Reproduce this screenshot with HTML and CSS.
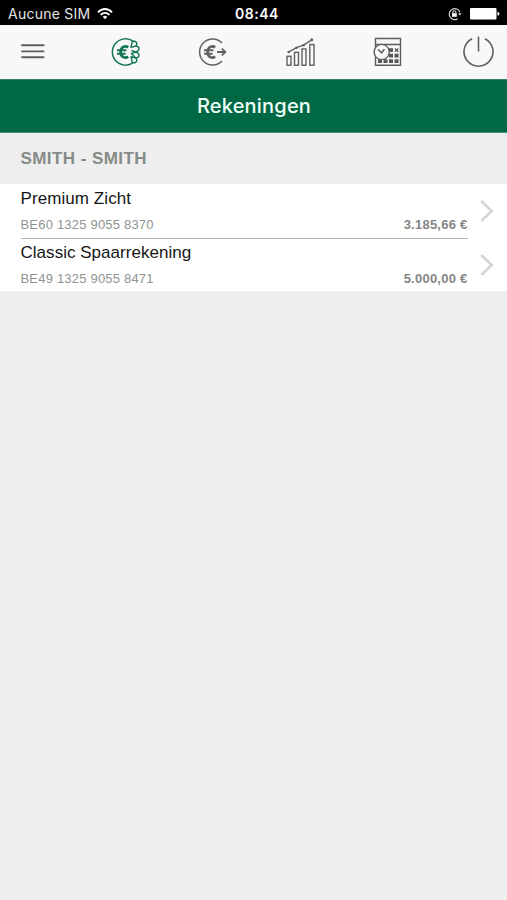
FILE: index.html
```html
<!DOCTYPE html>
<html lang="nl">
<head>
<meta charset="utf-8">
<title>Rekeningen</title>
<link rel="stylesheet" href="styles.css">
</head>
<body>
<div class="status">
  <div class="carrier"><span class="carrier-name">Aucune SIM</span>
    <svg class="wifi" width="16" height="12" viewBox="0 0 16 12" fill="none" stroke="#fff" stroke-width="1.9"><path d="M1 4.3C5-.1 11-.1 15 4.3M3.6 6.9C6.2 4.2 9.8 4.2 12.4 6.9"/><path d="M5.7 8.8Q8 6.7 10.3 8.8L8 11.2Z" fill="#fff" stroke="none"/></svg>
  </div>
  <span class="clock">08:44</span>
  <div class="indicators">
    <svg width="14" height="14" viewBox="0 0 14 14" fill="none" stroke="#ddd" stroke-width="1.1"><path d="M9.8 11.7A5.5 5.5 0 1 1 11.9 5.2"/><path d="M10.2 6.2h3.4l-1.7 2.4z" fill="#ddd" stroke="none"/><path d="M4.9 6.4V5.2a1.5 1.5 0 0 1 3 0v1.2"/><path d="M4 6.2h4.8v3.6H4z" fill="#fff" stroke="none"/></svg>
    <svg width="31" height="12" viewBox="0 0 31 12" fill="#fff"><rect width="26.5" height="11.5" rx="1"/><path d="M27.5 3.8q2 .3 2 2t-2 2z"/></svg>
  </div>
</div>
<nav class="toolbar">
  <svg class="menu" width="24" height="16" viewBox="0 0 24 16" stroke="#5b5d5e" stroke-width="1.9"><path d="M.3 1.3h23M.3 7.4h23M.3 13.3h23"/></svg>
  <svg class="accounts" width="29" height="30" viewBox="0 0 29 30" fill="none" stroke="#137653" stroke-width="1.5"><path d="M22.3 4.3A13.2 13.2 0 1 0 22.3 25.7"/><g stroke-width="2.7"><path d="M17.2 10.4C14.3 8.2 9.6 9.6 9.6 15s4.7 6.8 7.6 4.6"/><path d="M6 13.3h9.4M6 16.8h8.6" stroke-width="1.9"/></g><g stroke-width="1.4" stroke-linejoin="round"><path d="M20 10.4L21.2 5Q23.5 3.2 25.3 5.2Q26.6 7.6 24.8 9Z"/><path d="M24.8 9Q28.2 9.3 28 12.2Q27.4 14.6 24.8 14.8L20.4 13.5"/><path d="M24.8 15.2Q27.4 15.4 28 17.8Q28.2 20.7 24.8 21L20.4 16.5Z"/><path d="M20 19.6L21.2 25Q23.5 26.8 25.3 24.8Q26.6 22.4 24.8 21Z"/></g></svg>
  <svg class="transfer" width="29" height="30" viewBox="0 0 29 30" fill="none" stroke="#606263" stroke-width="1.5"><path d="M24 6A13 13 0 1 0 24 24"/><g stroke-width="2.7"><path d="M17.2 10.4C14.3 8.2 9.6 9.6 9.6 15s4.7 6.8 7.6 4.6"/><path d="M6 13.3h9.4M6 16.8h8.6" stroke-width="1.9"/></g><path d="M19 15h8.2M23.8 11.6L27.4 15L23.8 18.4" stroke-width="1.8"/></svg>
  <svg class="stats" width="30" height="30" viewBox="0 0 30 30" fill="none" stroke="#5f6162" stroke-width="1.4"><rect x="1" y="19.3" width="4" height="8.9"/><rect x="8.5" y="15.3" width="4" height="12.9"/><rect x="16" y="12" width="4" height="16.2"/><rect x="23.8" y="7.5" width="4.2" height="20.7"/><path d="M2.5 15.2L10.5 10.7L17.5 8.2L25.8 2.8"/><g fill="#5f6162" stroke="none"><circle cx="2.7" cy="15" r="1.3"/><circle cx="10.5" cy="10.7" r="1.2"/><circle cx="17.5" cy="8.2" r="1.2"/><circle cx="25.7" cy="2.8" r="1.5"/></g></svg>
  <svg class="planner" width="29" height="30" viewBox="0 0 29 30" fill="none" stroke="#5c5e5f" stroke-width="1.4"><path d="M2.5 1.5h25v26.7h-25zM2.5 7.5h25"/><g fill="#55585a" stroke="none"><path d="M16 11.3h4v3.6h-4zM16 16.8h4v3.6h-4zM21.5 16.8h4v3.6h-4zM5 22.3h4v3.6H5zM10.5 22.3h4v3.6h-4zM16 22.3h4v3.6h-4zM21.5 22.3h4v3.6h-4z"/></g><path d="M21.9 11.5l3.4 3.2M25.3 11.5l-3.4 3.2"/><circle cx="8.7" cy="15" r="7.6" fill="#f8f8f8"/><path d="M5 12.5l3.7 3.3l2.7-3.7" stroke-width="1.6"/></svg>
  <svg class="power" width="31" height="32" viewBox="0 0 31 32" fill="none" stroke="#606263" stroke-width="1.6"><path d="M9.1 2.7A14.5 14.5 0 1 0 21.9 2.7M15.5 .5v15"/></svg>
</nav>
<header class="title"><h1>Rekeningen</h1></header>
<main>
  <h2>SMITH - SMITH</h2>
  <div class="accounts-list">
    <div class="row">
      <div class="account"><div class="name">Premium Zicht</div><div class="details"><span class="iban">BE60 1325 9055 8370</span><b class="amount">3.185,66 €</b></div></div>
      <svg class="chevron" width="14" height="24" viewBox="0 0 14 24" fill="none" stroke="#d5d5d5" stroke-width="2.6"><path d="M1.3 2L11.7 12L1.3 22"/></svg>
    </div>
    <div class="row last">
      <div class="account"><div class="name">Classic Spaarrekening</div><div class="details"><span class="iban">BE49 1325 9055 8471</span><b class="amount">5.000,00 €</b></div></div>
      <svg class="chevron" width="14" height="24" viewBox="0 0 14 24" fill="none" stroke="#d5d5d5" stroke-width="2.6"><path d="M1.3 2L11.7 12L1.3 22"/></svg>
    </div>
  </div>
</main>
</body>
</html>
```
FILE: styles.css
```css
* { box-sizing: border-box; }
body { margin: 0; min-height: 900px; background: #eee; font-family: "Liberation Sans", sans-serif; }
svg { display: block; flex: none; }
.status { display: grid; grid-template-columns: 1fr auto 1fr; align-items: center; height: 25px; padding: 2px 6px 0 8px; background: #000; color: #fff; font: 14px/22px Inter, sans-serif; }
.carrier { display: flex; align-items: center; gap: 7px; color: #e5e5e5; letter-spacing: .25px; }
.clock { font-weight: 600; letter-spacing: .5px; margin-left: 5px; }
.indicators { display: flex; align-items: center; justify-content: flex-end; gap: 8px; }
.toolbar { display: flex; align-items: center; height: 54px; padding: 0 0 1px 21px; background: #f8f8f8; }
.accounts { margin-left: 66px; }
.transfer { margin-left: 58px; }
.stats { margin-left: 59px; }
.planner { margin-left: 57px; }
.power { margin-left: 61px; }
.title { display: flex; align-items: center; justify-content: center; height: 54px; background: #006845; border-top: 1px solid #397f68; border-bottom: 1px solid #4b8c75; }
.title h1 { margin: 0 0 0 1px; color: #f0fff9; font: 500 20px/24px Inter, sans-serif; letter-spacing: .2px; }
h2 { margin: 0; height: 51px; padding: 1px 20.5px 0; color: #858b86; font-size: 17px; line-height: 50px; letter-spacing: .43px; }
.accounts-list { background: #fff; height: 107px; }
.row { display: flex; align-items: center; gap: 12px; height: 55px; padding-left: 20.5px; }
.account { width: 447px; height: 100%; padding-top: 5px; border-bottom: 1px solid #b5b7b6; }
.chevron { margin-bottom: 1px; }
.name { height: 22px; color: #161616; font-size: 17px; line-height: 20px; letter-spacing: .08px; }
.details { display: flex; justify-content: space-between; padding-top: 4px; font-size: 13px; line-height: 20px; color: #8e9490; }
.iban { letter-spacing: .2px; }
.amount { color: #858585; letter-spacing: .24px; }
.last { height: 52px; }
.last .account { padding-top: 4px; border: 0; }
.last .name { letter-spacing: .03px; }
```
